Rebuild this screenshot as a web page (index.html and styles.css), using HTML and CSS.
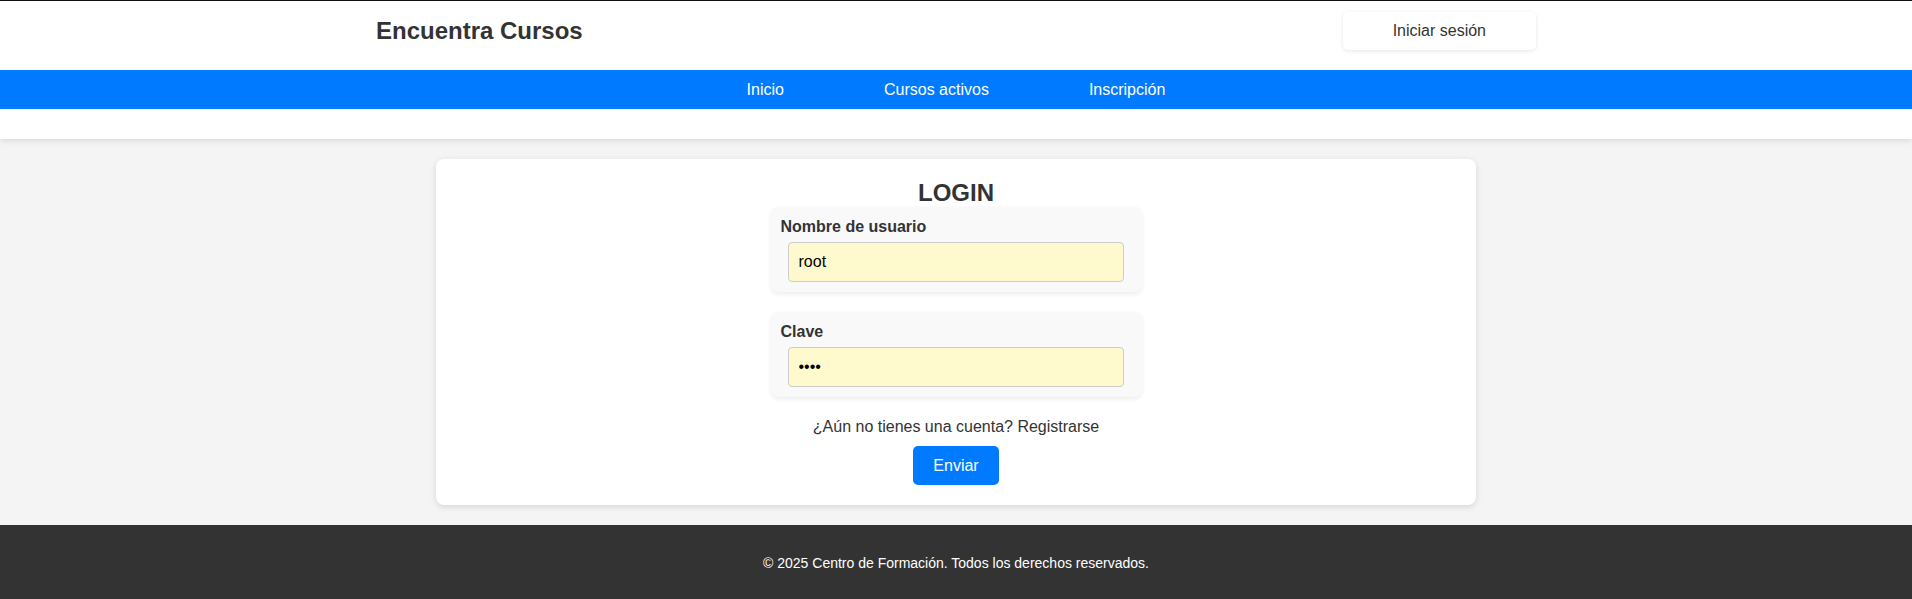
FILE: index.html
```html
<!DOCTYPE html>
<html lang="es">
<head>
<meta charset="utf-8">
<title>Encuentra Cursos - Login</title>
<link rel="stylesheet" href="styles.css">
</head>
<body>
<header class="site-header">
  <div class="top-row">
    <h1 class="brand">Encuentra Cursos</h1>
    <a class="login-btn" href="#">Iniciar sesión</a>
  </div>
  <nav class="main-nav">
    <ul class="nav-list">
      <li><a href="#">Inicio</a></li>
      <li><a href="#">Cursos activos</a></li>
      <li><a href="#">Inscripción</a></li>
    </ul>
  </nav>
</header>
<main class="main">
  <section class="card">
    <h2 class="card-title">LOGIN</h2>
    <form class="login-form">
      <div class="form-group">
        <label class="field-label" for="user">Nombre de usuario</label>
        <input class="field-input" id="user" type="text" value="root">
      </div>
      <div class="form-group">
        <label class="field-label" for="pass">Clave</label>
        <input class="field-input" id="pass" type="password" value="root">
      </div>
      <p class="register">¿Aún no tienes una cuenta? <a href="#">Registrarse</a></p>
      <button class="submit-btn" type="button">Enviar</button>
    </form>
  </section>
</main>
<footer class="site-footer">
  <p class="footer-text">© 2025 Centro de Formación. Todos los derechos reservados.</p>
</footer>
</body>
</html>
```
FILE: styles.css
```css
* { box-sizing: border-box; }
html, body { margin: 0; padding: 0; }
body {
  font-family: "Liberation Sans", Arial, sans-serif;
  font-size: 16px;
  color: #333;
  background: #f4f4f4;
  overflow: hidden;
}
a { color: inherit; text-decoration: none; }

.site-header {
  background: #fff;
  border-top: 1px solid #111;
  padding-bottom: 30px;
  box-shadow: 0 2px 5px rgba(0, 0, 0, 0.1);
  position: relative;
}
.top-row {
  max-width: 1200px;
  margin: 0 auto;
  padding: 0 20px 9px;
  display: flex;
  justify-content: space-between;
  align-items: center;
}
.brand {
  font-size: 24px;
  font-weight: bold;
  margin: 16px 0;
  line-height: normal;
}
.login-btn {
  display: block;
  background: #fff;
  padding: 10px 50px;
  border-radius: 5px;
  box-shadow: 0 1px 4px rgba(0, 0, 0, 0.1);
  color: #333;
  line-height: normal;
}
.main-nav {
  background: #007bff;
  padding: 10px 0;
}
.nav-list {
  list-style: none;
  margin: 0;
  padding: 0;
  display: flex;
  justify-content: center;
  gap: 100px;
}
.nav-list a {
  color: #fff;
  line-height: 19px;
  display: block;
}

.main {
  padding: 20px 0;
}
.card {
  max-width: 1040px;
  margin: 0 auto;
  background: #fff;
  padding: 20px;
  border-radius: 8px;
  box-shadow: 0 2px 6px rgba(0, 0, 0, 0.12);
  text-align: center;
}
.card-title {
  margin: 0;
  font-size: 24px;
  font-weight: bold;
  line-height: 28px;
}
.login-form {
  display: flex;
  flex-direction: column;
  align-items: center;
}
.form-group {
  width: 371px;
  background: #f9f9f9;
  padding: 10px;
  border-radius: 8px;
  box-shadow: 0 2px 5px rgba(0, 0, 0, 0.08);
  margin-bottom: 20px;
  text-align: left;
}
.field-label {
  display: block;
  font-weight: bold;
  line-height: 19px;
  margin-bottom: 6px;
}
.field-input {
  display: block;
  width: 96%;
  margin: 0 auto;
  padding: 10px;
  font-family: "Liberation Sans", Arial, sans-serif;
  font-size: 16px;
  line-height: normal;
  color: #000;
  background: #fffacd;
  border: 1px solid #ccc;
  border-radius: 4px;
}
.register {
  margin: 0 0 10px;
  line-height: 19px;
}
.submit-btn {
  background: #007bff;
  color: #fff;
  border: none;
  border-radius: 5px;
  padding: 10px 20px;
  font-family: "Liberation Sans", Arial, sans-serif;
  font-size: 16px;
  line-height: 19px;
}

.site-footer {
  background: #333;
  color: #fff;
  text-align: center;
  padding: 30px 0 30px;
}
.footer-text {
  margin: 0;
  font-size: 14px;
  line-height: 16px;
}
```
